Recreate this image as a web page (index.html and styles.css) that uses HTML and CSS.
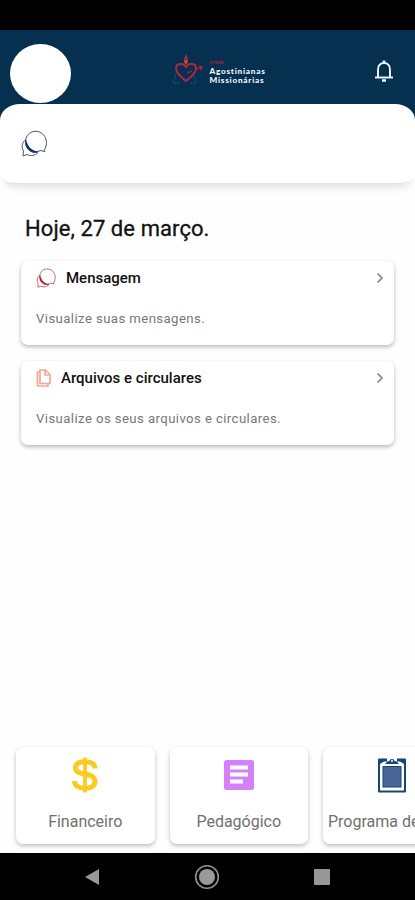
FILE: index.html
```
<!DOCTYPE html>
<html lang="pt-BR">
<head>
  <meta charset="UTF-8">
  <meta name="viewport" content="width=device-width, initial-scale=1.0">
  <title>Agostinianas Missionárias</title>
  <link rel="stylesheet" href="styles.css">
</head>
<body>
  <div class="status-bar"></div>

  <header class="header">
    <div class="avatar"></div>
    <div class="logo">
      <svg class="logo-mark" viewBox="0 0 32 32" width="32" height="32" fill="none">
        <path d="M4 20L1 29M22 22l3 7M2 29h6M18 29h6" stroke="#17618a" stroke-width="1" stroke-dasharray="2 1.5"/>
        <path d="M14 27C9 23 4 19 4 14.500C4 9 11 8.500 14 13C17 8.500 24 9 24 14.500C24 19 19 23 14 27z" stroke="#c3203f" stroke-width="1.800"/>
        <path d="M14 10C11 8 13 5 14 2C15 5 17 8 14 10z" stroke="#b8323a" stroke-width="1.300"/>
        <path d="M14 9V6" stroke="#e29a38" stroke-width="1"/>
        <path d="M15 18.500l5-1M24 15l5-1.500M27 12l3.500 1.300L28 16" stroke="#c3203f" stroke-width="1.200"/>
      </svg>
      <div class="logo-text">
        <em>Irmãs</em>
        <strong>Agostinianas</strong>
        <strong>Missionárias</strong>
      </div>
    </div>
    <svg class="bell" viewBox="0 0 20 24" width="20" height="24" fill="none" stroke="#f2f5fa">
      <path d="M4 18V10.500C4 6.500 6.500 4 10 4s6 2.500 6 6.500V18" stroke-width="1.900"/>
      <path d="M1 18.500h18" stroke-width="1.900"/>
      <path d="M10 1.500V4M8 21.500h4" stroke-width="2.600"/>
    </svg>
  </header>

  <section class="sheet">
    <svg class="chat-icon" viewBox="0 0 26 27" width="26" height="27">
      <path class="bubble" d="M5 9.500C1 12 0 17 2.500 21L2 26L6 24.500C10 26.500 14 25.500 17 22.500"/>
      <path class="bubble" d="M23 20.500C27 15 26 7 20.500 3C15 -.5 8 1.500 5.500 7C3 13 5 19 10 21.500C13 23 16 22.500 19 20.500L24 21.500z"/>
      <path class="crescent" d="M5 9C3.500 13.500 5 18.500 9 21C12 23 15 23.500 18 21.500C12 21.500 6.500 17.500 5 9z"/>
    </svg>
  </section>

  <main class="content">
    <h1>Hoje, 27 de março.</h1>

    <article class="card">
      <div class="card-head">
        <svg class="chat-icon red" viewBox="0 0 26 27" width="20" height="20">
          <path class="bubble" d="M5 9.500C1 12 0 17 2.500 21L2 26L6 24.500C10 26.500 14 25.500 17 22.500"/>
          <path class="bubble" d="M23 20.500C27 15 26 7 20.500 3C15 -.5 8 1.500 5.500 7C3 13 5 19 10 21.500C13 23 16 22.500 19 20.500L24 21.500z"/>
          <path class="crescent" d="M5 9C3.500 13.500 5 18.500 9 21C12 23 15 23.500 18 21.500C12 21.500 6.500 17.500 5 9z"/>
        </svg>
        <h2>Mensagem</h2>
        <svg class="chevron" viewBox="0 0 8 12" width="8" height="12"><path d="M1.500 1.500L6 6L1.500 10.500"/></svg>
      </div>
      <p>Visualize suas mensagens.</p>
    </article>

    <article class="card">
      <div class="card-head">
        <svg class="file-icon" viewBox="0 0 15 18" width="15" height="18">
          <path d="M4 1h5.500L14 5.500V14.500H4zM9 1v5h5"/>
          <path d="M4 3H1.500v14h10.500v-2.500"/>
        </svg>
        <h2>Arquivos e circulares</h2>
        <svg class="chevron" viewBox="0 0 8 12" width="8" height="12"><path d="M1.500 1.500L6 6L1.500 10.500"/></svg>
      </div>
      <p>Visualize os seus arquivos e circulares.</p>
    </article>
  </main>

  <section class="shortcuts">
    <div class="shortcut">
      <svg viewBox="0 0 28 36" width="28" height="36" fill="none" stroke="#fccb20">
        <path d="M24 11.500C24 7 20 4.800 14 4.800S4.500 7 4.500 11C4.500 20 24 14 24 24.500C24 29 20 31.200 14 31.200S3.500 29 3.500 24" stroke-width="5"/>
        <path d="M14 .5v35" stroke-width="3.800"/>
      </svg>
      <span>Financeiro</span>
    </div>
    <div class="shortcut">
      <svg viewBox="0 0 30 36" width="30" height="36">
        <rect y="3" width="30" height="30" rx="2.500" fill="#d580fb"/>
        <path d="M6 10.500h18M6 17.500h18M6 24.500h13" stroke="#fff" stroke-width="4"/>
      </svg>
      <span>Pedagógico</span>
    </div>
    <div class="shortcut shortcut-wide">
      <svg viewBox="0 0 28 36" width="28" height="36">
        <rect y="1.500" width="28" height="34" rx="1" fill="#164579"/>
        <path d="M2 7l4-2.500h16L26 7v26.500H2z" fill="#fff"/>
        <path d="M9 1h10v4H9z" fill="#fff"/>
        <rect x="4.500" y="9" width="19" height="21.500" fill="#194277"/>
        <rect x="5.500" y="10" width="17" height="19.500" fill="#4b6496"/>
        <path d="M7 7L9.500 4.200h1.700a2.900 2.900 0 0 1 5.600 0h1.700L21 7z" fill="#164579"/>
        <circle cx="14" cy="4" r="1" fill="#fff"/>
      </svg>
      <span>Programa de</span>
    </div>
  </section>

  <nav class="nav-bar">
    <svg viewBox="0 0 16 18" width="16" height="18"><path d="M15 1v16L1 9z" fill="#999"/></svg>
    <svg viewBox="0 0 26 26" width="26" height="26">
      <circle cx="13" cy="13" r="11.300" fill="none" stroke="#929292" stroke-width="1.600"/>
      <circle cx="13" cy="13" r="8" fill="#9a9a9a"/>
    </svg>
    <svg viewBox="0 0 16 16" width="16" height="16"><rect width="16" height="16" rx="1" fill="#969696"/></svg>
  </nav>
</body>
</html>
```
FILE: styles.css
```
* {
  margin: 0;
  padding: 0;
  box-sizing: border-box;
}

body {
  height: 900px;
  display: flex;
  flex-direction: column;
  font-family: Roboto, sans-serif;
  background: #fefefe;
  overflow: hidden;
}

svg {
  display: block;
  flex-shrink: 0;
}

.status-bar {
  height: 30px;
  background: #000;
}

.header {
  height: 90px;
  padding: 14px 21px 0 10px;
  display: flex;
  align-items: flex-start;
  justify-content: space-between;
  background: #06304f;
}

.avatar {
  width: 61px;
  height: 59px;
  border-radius: 50%;
  background: #fff;
}

.logo {
  display: flex;
  margin: 10px 0 0 -6px;
}

.logo-mark {
  margin-right: 6px;
}

.logo-text {
  display: flex;
  flex-direction: column;
  padding-top: 4px;
  width: 58px;
  font-family: Lato, sans-serif;
  font-size: 8.2px;
  line-height: 10px;
  color: #f2f7fa;
}

.logo-text em {
  font-size: 6.5px;
  line-height: 8px;
  color: #b3213f;
}

.logo-text strong {
  font-weight: 900;
  letter-spacing: 0.75px;
}

.logo-text strong + strong {
  margin-top: -1px;
}

.bell {
  margin-top: 15px;
}

.sheet {
  height: 79px;
  margin-top: -16px;
  padding: 26px 21px;
  border-radius: 20px 20px 16px 16px / 16px 16px 10px 10px;
  background: #fff;
  box-shadow: 0 10px 8px -6px rgba(0, 0, 0, 0.13);
}

.chat-icon .bubble {
  fill: none;
  stroke: #4b5375;
  stroke-width: 1;
}

.chat-icon .crescent {
  fill: #143169;
}

.chat-icon.red .bubble {
  stroke: #c2575d;
  stroke-width: 1.2;
}

.chat-icon.red .crescent {
  fill: #b21f2c;
}

.content {
  flex: 1;
  padding: 31px 21px 0;
}

h1 {
  margin: 0 0 17px 4px;
  font-size: 22px;
  font-weight: 400;
  line-height: 30px;
  letter-spacing: 0.08px;
  color: #111;
  -webkit-text-stroke: 0.3px #111;
}

.card {
  height: 84px;
  margin-bottom: 16px;
  padding: 6px 10px 0 15px;
  border-radius: 7px;
  background: #fff;
  box-shadow: 0 2px 4px rgba(0, 0, 0, 0.28);
}

.card-head {
  display: flex;
  align-items: center;
  height: 22px;
}

h2 {
  flex: 1;
  margin-left: 10px;
  font-size: 15px;
  font-weight: 500;
  color: #111;
}

.chevron path,
.file-icon path {
  fill: none;
  stroke: #888;
  stroke-width: 1.7;
}

.file-icon path {
  stroke: #f9a596;
}

.card p {
  margin-top: 20px;
  font-size: 13.2px;
  line-height: 20px;
  letter-spacing: 0.4px;
  color: #777;
}

/* the last card runs off the right edge */
.shortcuts {
  display: flex;
  gap: 15px;
  height: 112px;
  margin-top: -6px;
  padding: 6px 0 9px 16px;
  overflow: hidden;
}

.shortcut {
  flex: 0 0 138.5px;
  display: flex;
  flex-direction: column;
  align-items: center;
  padding-top: 10px;
  border-radius: 7px;
  background: #fff;
  box-shadow: 0 2px 4px rgba(0, 0, 0, 0.26);
}

.shortcut span {
  margin-top: 19px;
  font-size: 16px;
  line-height: 20px;
  color: #707070;
  white-space: nowrap;
}

.shortcut-wide span {
  align-self: flex-start;
  margin-left: 5px;
}

.nav-bar {
  height: 47px;
  padding: 0 85px 0 84px;
  display: flex;
  align-items: center;
  justify-content: space-between;
  background: #000;
}
```
